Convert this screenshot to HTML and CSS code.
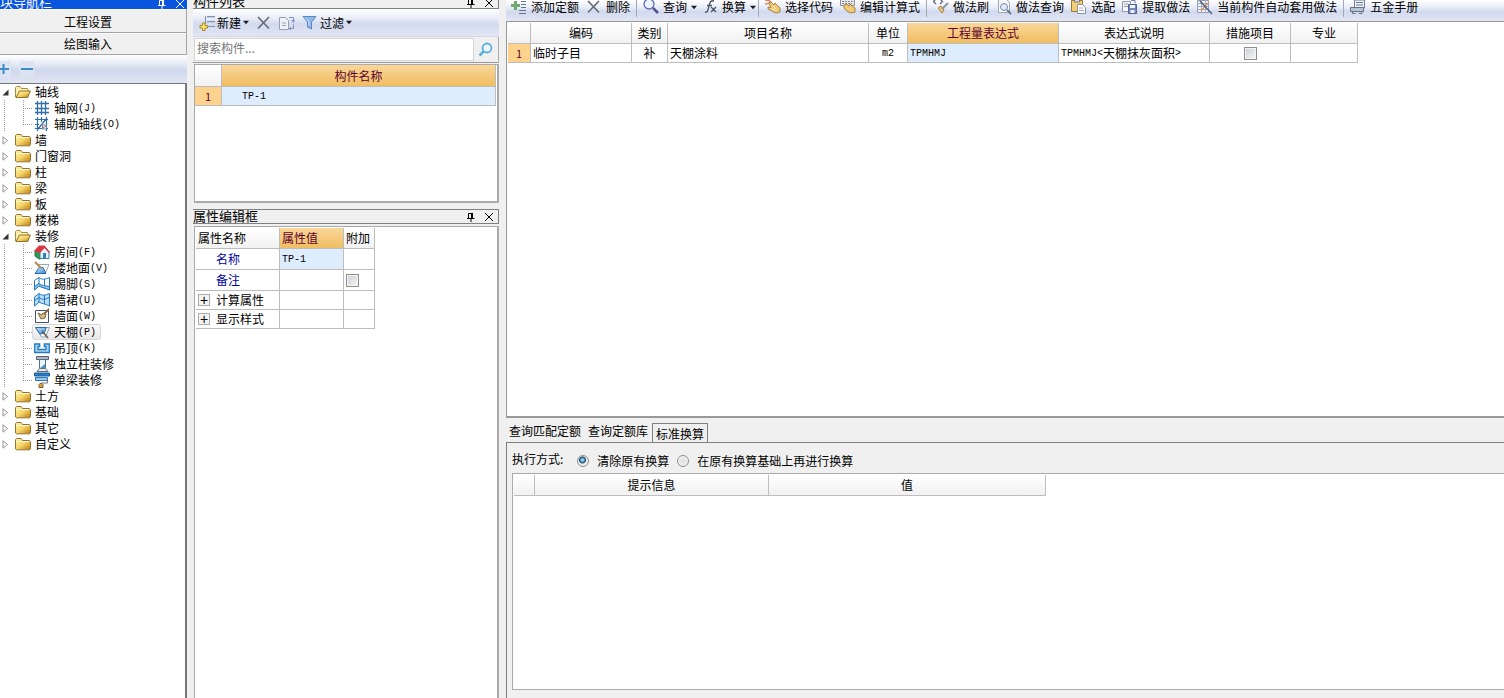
FILE: index.html
```html
<!DOCTYPE html>
<html lang="zh-CN">
<head>
<meta charset="utf-8">
<title>构件做法编辑</title>
<link rel="stylesheet" href="styles.css">
</head>
<body>
<svg class="defs" aria-hidden="true">
  <defs>
    <linearGradient id="gold" x1="0" y1="0" x2="1" y2="1"><stop offset="0" stop-color="#fff3b0"/><stop offset=".5" stop-color="#f6d56a"/><stop offset="1" stop-color="#b87a14"/></linearGradient>
    <linearGradient id="blue" x1="0" y1="0" x2="1" y2="1"><stop offset="0" stop-color="#cfe6fa"/><stop offset="1" stop-color="#3b86cf"/></linearGradient>
    <symbol id="open" viewBox="0 0 7 7"><path d="M6.500 .5v6H.5z" fill="#333"/></symbol>
    <symbol id="shut" viewBox="0 0 7 9"><path d="M1 .8 5.500 4.500 1 8.200z" fill="#fff" stroke="#909090"/></symbol>
    <symbol id="folder" viewBox="0 0 16 16"><path d="M.5 13V3.500l1-1H6l1.500 2h7l1 1V13l-1 .8h-13z" fill="url(#gold)" stroke="#94752a"/><path d="M1.500 5.500h13" stroke="#fff6cf"/></symbol>
    <symbol id="folder-open" viewBox="0 0 16 16"><path d="M.5 13V3.500l1-1H5l1.500 2h6l.5 1V13z" fill="#fff0b0" stroke="#a58a45"/><path d="m1 13.500 3.500-6.500h11L12.500 13.500z" fill="url(#gold)" stroke="#94752a"/></symbol>
    <symbol id="grid" viewBox="0 0 16 16"><path d="M3.500 1v14M7.500 1v14M11.500 1v14M1 3.500h14M1 8.500h14M1 12.500h14" fill="none" stroke="#2f6ca8" stroke-width="1.300"/></symbol>
    <symbol id="axis" viewBox="0 0 16 16"><path d="M3.500 1v14M12.500 1v14M1 3.500h13M1 12.500h13M7.500 1v5M1 8.500h4M4 13l9-11" fill="none" stroke="#2f6ca8" stroke-width="1.200"/><path d="M8.500 9h4v4h-4z" fill="#e3eef8" stroke="#77899b"/><path d="m9 12 3-2" stroke="#b66"/></symbol>
    <symbol id="house" viewBox="0 0 16 16"><path d="m1 7 5-5 4 4v8l-5 1-4-3z" fill="#2d9b50" stroke="#247c43"/><path d="m6 7 4.500-4L15 8v6.500H6z" fill="#e8f3fb" stroke="#3c7cad"/><path d="M0 7 5 1.500h5.500L16 8l-1 1-4.500-5L6 9z" fill="#d93640"/><path d="M9 9h3v5.500H9z" fill="#2f82bd"/></symbol>
    <symbol id="floor" viewBox="0 0 16 16"><path d="M5 4.500h10L11.500 13" fill="#fff" stroke="#9aa7b4"/><path d="m1 13.500 4-6h4l3 6z" fill="url(#blue)" stroke="#236eb3"/><path d="M1 2 7 8" stroke="#b88846" stroke-width="2"/></symbol>
    <symbol id="skirt" viewBox="0 0 16 16"><path d="M.5 4.500 5 1.500v8l-4.500 4zM5 1.500c3 2.500 6 2 10.500 0V14C11 11.500 8 12 5 9.500" fill="#fff" stroke="#2479bd"/><path d="M.5 10.500 5 7.500c3 2.500 6 2 10.500 3V14C11 11.500 8 12 5 10l-4.500 4z" fill="#8cc7ef" stroke="#2479bd"/><path d="M10.500 3v6" stroke="#2479bd"/></symbol>
    <symbol id="dado" viewBox="0 0 16 16"><path d="M.5 5 5 1.500c3 2.500 6 2 10.500 0V14C11 11.500 8 12 5 10L.5 14z" fill="#b9def6" stroke="#2479bd"/><path d="M.5 8.500 5 5.500c3 2.500 6 2 10.500 0M5 1.500V10M10.500 3v9" fill="none" stroke="#2479bd"/></symbol>
    <symbol id="wall" viewBox="0 0 16 16"><path d="M1.500 2.500h13v12h-13z" fill="#fff" stroke="#42586f"/><path d="m4 5 3 6 4-1 1-4-3-1-1 2z" fill="#d9bc85" stroke="#80643f"/><path d="m10 6 5-5" stroke="#8c6940" stroke-width="2"/></symbol>
    <symbol id="ceiling" viewBox="0 0 16 16"><path d="M1.500 3.500h14l-4 9.500h-4z" fill="#fff" stroke="#8ca0b2"/><path d="M1.500 3.500h11l-2.500 6-4 .5z" fill="url(#blue)" stroke="#236eb3"/><path d="m8 7 6 7" stroke="#6e6251" stroke-width="1.600"/></symbol>
    <symbol id="drop" viewBox="0 0 16 16"><path d="M.7 4h5v2.500H4V9.500h8V6.500h-1.700V4h5v8.500H.7z" fill="#a7d7f8" stroke="#247bbd" stroke-width="1.300"/></symbol>
    <symbol id="column" viewBox="0 0 16 16"><path d="M2.500.5h12v3h-12z" fill="#aeb8c0" stroke="#56636f"/><path d="M5.500 3.500h6v9h-6z" fill="#eaf6ff" stroke="#56718b"/><path d="M3 15.500 5.500 12.500h6l2.500 3z" fill="#e9edf0" stroke="#63717d"/><path d="m6 12 5-4v4z" fill="#4c96cc"/></symbol>
    <symbol id="beam" viewBox="0 0 16 16"><path d="M.5 1h15v3H.5z" fill="#297fc7" stroke="#1f5f9a"/><path d="M1.500 5.500h12v3h-12z" fill="#94c9ef" stroke="#2f79b5"/><path d="M5 15.500v-3l1-1h2l1 1v3z" fill="#d9a04b" stroke="#85602b"/><path d="M7 11h6.500V8" fill="none" stroke="#777"/></symbol>
    <symbol id="pin" viewBox="0 0 10 10"><path d="M2.500 6V1.500h4V6M1 6.500h7.500M5 7v3" fill="none" stroke="currentColor"/><path d="M6 1v5" stroke="currentColor" stroke-width="2"/></symbol>
    <symbol id="close" viewBox="0 0 10 10"><path d="m1 1 8 8M9 1 1 9" stroke="currentColor"/></symbol>
    <symbol id="delete" viewBox="0 0 16 16"><path d="m2 2 11 11.500M13 2 2 13.500" stroke="#666d78" stroke-width="1.700"/></symbol>
    <symbol id="new" viewBox="0 0 16 16"><path d="M8 1.500h8M8 6.500h8M8 11.500h8M6.500 1v8" stroke="#7d91ad"/><path d="M8 2.500h8M8 7.500h8" stroke="#c3d0e2"/><path d="M3.500 8h2.500v2.500h2.500v2.500H6v2.500H3.500V13H1v-2.500h2.500z" fill="#ffe565" stroke="#a88b2a"/></symbol>
    <symbol id="copy" viewBox="0 0 16 16"><path d="M.5 2.500h6l3 3v9h-9z" fill="#eef1f6" stroke="#98a1b2"/><path d="M3 8h4M3 10.500h4" stroke="#98a1b2"/><path d="M10 2.500h4.500v3M10 13.500h4.500v-4" fill="none" stroke="#8290c0"/><path d="m12 5 2.500 3L16 5zM10 13.500l2-2v4z" fill="#8290c0"/></symbol>
    <symbol id="filter" viewBox="0 0 16 16"><path d="M1 1.500h13L9.500 7v7l-4-2V7z" fill="#8eb8e8" stroke="#5987c2"/><path d="m3 2.500 4 4v4" fill="none" stroke="#d5e7fa"/></symbol>
    <symbol id="search" viewBox="0 0 16 16"><circle cx="9" cy="6" r="4.500" fill="#eef8ff" stroke="#5bb0dd" stroke-width="1.800"/><path d="m5.500 9.500-4 4" stroke="#5bb0dd" stroke-width="2.500"/></symbol>
    <symbol id="lens" viewBox="0 0 16 16"><circle cx="6" cy="5" r="5" fill="#eaf3ff" stroke="#626fae" stroke-width="1.300"/><path d="m10 9 5 5" stroke="#4c538f" stroke-width="2.500"/></symbol>
    <symbol id="add" viewBox="0 0 16 16"><path d="M3 2h3v3h3v3H6v3H3V8H0V5h3z" fill="#70aa70"/><path d="M10 2.500h5M10 5.500h5M10 8.500h5M8 11.500h7M8 14.500h7" stroke="#687389"/></symbol>
    <symbol id="fx" viewBox="0 0 14 16"><path d="M1 13c3 1 3-3 4-6s1-6 5-5M3 6.500h5M7 8l5 5M12 8l-5 5" fill="none" stroke="#4e5566" stroke-width="1.400"/></symbol>
    <symbol id="hand" viewBox="0 0 16 16"><path d="m0 1 5 1M2 0l4 3M0 5l5-1" stroke="#d88c67" stroke-width="1.500"/><path d="m4 4 2-1 3 3 1-2 5 5v4l-4 1-4-2-4-2V8l3 1z" fill="#f0cb78" stroke="#aa813f"/><path d="m8 7 3 3M6 9l4 3" stroke="#fff2bb"/></symbol>
    <symbol id="keys" viewBox="0 0 16 16"><path d="M.5.5h14v6H.5z" fill="#e5e6e9" stroke="#8b8f99"/><path d="M2 2.500h11M2 4.500h10" stroke="#8b8f99" stroke-dasharray="2 1"/><path d="m4 6 2-1 3 2 1-2 5 4v4l-4 1-4-2-3-3z" fill="#f0cb78" stroke="#aa813f"/></symbol>
    <symbol id="brush" viewBox="0 0 16 16"><path d="M3 0 .5 2.500 3 5M7 0l2.500 2.500L7 5" fill="none" stroke="#626a80" stroke-width="1.300"/><path d="m5 9 3-2 3 4-2 3z" fill="#f0cb78" stroke="#aa813f"/><path d="m9 10 6-6" stroke="#8b94a8" stroke-width="2"/></symbol>
    <symbol id="doc" viewBox="0 0 16 16"><path d="M2.500 0v13.500h11V4l-3-4z" fill="#f8fafc" stroke="#a0a7b3"/><circle cx="8" cy="8" r="3.500" fill="#dceafa" stroke="#7c8cac"/><path d="m11 11 4 4" stroke="#68748f" stroke-width="2"/></symbol>
    <symbol id="paste" viewBox="0 0 16 16"><path d="M.5 1.500h11v11H.5z" fill="#f2cf72" stroke="#98783a"/><path d="M3.500 0h5v3h-5z" fill="#d7d9de" stroke="#777d88"/><path d="M6.500 5.500h5l3 3v6h-8z" fill="#fff" stroke="#8993a8"/><path d="M8 9h4M8 11.500h5" stroke="#a0a9bd"/></symbol>
    <symbol id="save" viewBox="0 0 16 16"><path d="M.5 2.500h8v10h-8z" fill="#f5f7fb" stroke="#9299ad"/><path d="M2 5h4M2 7.500h4" stroke="#9299ad"/><path d="M6.500 5.500h8v9h-8z" fill="#7689bb" stroke="#53658f"/><path d="M8 6h5v3H8zM8.500 11h4v3h-4z" fill="#edf1fa"/><path d="M9 1.500h4v3" fill="none" stroke="#6f80b2"/></symbol>
    <symbol id="auto" viewBox="0 0 16 16"><path d="M.5 1.500h11v12H.5z" fill="#f3f6fa" stroke="#8a98b2"/><path d="M0 4.500h12M0 7.500h12M0 10.500h12M4.500 1v13M8.500 1v13" stroke="#9dadc8"/><path d="m12 3-8 9" stroke="#dc9b59" stroke-width="1.600"/><path d="m3 2 12 13" stroke="#58657f" stroke-width="1.600"/></symbol>
    <symbol id="manual" viewBox="0 0 16 16"><path d="M4.500 1h10v8h-10z" fill="#eef3fa" stroke="#717d94"/><path d="M6 3.500h7M6 6h7" stroke="#717d94"/><path d="M.5 8.500h13v4H.5z" fill="#b9c5d5" stroke="#657286"/><path d="M2.500 12.500v2h3M9 14.500h3v-2" fill="none" stroke="#657286"/></symbol>
    <symbol id="down" viewBox="0 0 7 5"><path d="M0 .5h7L3.500 4.500z" fill="#1c1c1c"/></symbol>
    <symbol id="plus" viewBox="0 0 14 14"><path d="M1 7h11M6.500 2v10" stroke="#3c8cc6" stroke-width="2"/></symbol>
    <symbol id="minus" viewBox="0 0 14 14"><path d="M1 7h12" stroke="#3c8cc6" stroke-width="2"/></symbol>
  </defs>
</svg>
<div class="app">
  <nav class="nav">
    <header class="title title-active title-cut"><h2>块导航栏</h2><button aria-label="固定"><svg><use href="#pin"/></svg></button><button aria-label="关闭"><svg><use href="#close"/></svg></button></header>
    <button class="nav-tab">工程设置</button>
    <button class="nav-tab">绘图输入</button>
    <div class="nav-tools"><button aria-label="展开"><svg><use href="#plus"/></svg></button><button aria-label="折叠"><svg><use href="#minus"/></svg></button></div>
    <ul class="tree">
      <li><button class="node"><svg class="arrow"><use href="#open"/></svg><svg class="icon"><use href="#folder-open"/></svg>轴线</button>
        <ul class="branch">
          <li><button class="leaf"><svg class="icon"><use href="#grid"/></svg>轴网<span class="latin">(J)</span></button></li>
          <li><button class="leaf"><svg class="icon"><use href="#axis"/></svg>辅助轴线<span class="latin">(O)</span></button></li>
        </ul>
      </li>
      <li><button class="node"><svg class="arrow"><use href="#shut"/></svg><svg class="icon"><use href="#folder"/></svg>墙</button></li>
      <li><button class="node"><svg class="arrow"><use href="#shut"/></svg><svg class="icon"><use href="#folder"/></svg>门窗洞</button></li>
      <li><button class="node"><svg class="arrow"><use href="#shut"/></svg><svg class="icon"><use href="#folder"/></svg>柱</button></li>
      <li><button class="node"><svg class="arrow"><use href="#shut"/></svg><svg class="icon"><use href="#folder"/></svg>梁</button></li>
      <li><button class="node"><svg class="arrow"><use href="#shut"/></svg><svg class="icon"><use href="#folder"/></svg>板</button></li>
      <li><button class="node"><svg class="arrow"><use href="#shut"/></svg><svg class="icon"><use href="#folder"/></svg>楼梯</button></li>
      <li><button class="node"><svg class="arrow"><use href="#open"/></svg><svg class="icon"><use href="#folder-open"/></svg>装修</button>
        <ul class="branch">
          <li><button class="leaf"><svg class="icon"><use href="#house"/></svg>房间<span class="latin">(F)</span></button></li>
          <li><button class="leaf"><svg class="icon"><use href="#floor"/></svg>楼地面<span class="latin">(V)</span></button></li>
          <li><button class="leaf"><svg class="icon"><use href="#skirt"/></svg>踢脚<span class="latin">(S)</span></button></li>
          <li><button class="leaf"><svg class="icon"><use href="#dado"/></svg>墙裙<span class="latin">(U)</span></button></li>
          <li><button class="leaf"><svg class="icon"><use href="#wall"/></svg>墙面<span class="latin">(W)</span></button></li>
          <li><button class="leaf selected"><svg class="icon"><use href="#ceiling"/></svg>天棚<span class="latin">(P)</span></button></li>
          <li><button class="leaf"><svg class="icon"><use href="#drop"/></svg>吊顶<span class="latin">(K)</span></button></li>
          <li><button class="leaf"><svg class="icon"><use href="#column"/></svg>独立柱装修</button></li>
          <li><button class="leaf"><svg class="icon"><use href="#beam"/></svg>单梁装修</button></li>
        </ul>
      </li>
      <li><button class="node"><svg class="arrow"><use href="#shut"/></svg><svg class="icon"><use href="#folder"/></svg>土方</button></li>
      <li><button class="node"><svg class="arrow"><use href="#shut"/></svg><svg class="icon"><use href="#folder"/></svg>基础</button></li>
      <li><button class="node"><svg class="arrow"><use href="#shut"/></svg><svg class="icon"><use href="#folder"/></svg>其它</button></li>
      <li><button class="node"><svg class="arrow"><use href="#shut"/></svg><svg class="icon"><use href="#folder"/></svg>自定义</button></li>
    </ul>
  </nav>

  <section class="middle">
    <header class="title title-cut"><h2>构件列表</h2><button aria-label="固定"><svg><use href="#pin"/></svg></button><button aria-label="关闭"><svg><use href="#close"/></svg></button></header>
    <div class="toolbar list-tools">
      <button><svg class="icon"><use href="#new"/></svg>新建<svg class="down"><use href="#down"/></svg></button>
      <button aria-label="删除"><svg class="icon"><use href="#delete"/></svg></button>
      <button aria-label="复制"><svg class="icon"><use href="#copy"/></svg></button>
      <button><svg class="icon"><use href="#filter"/></svg>过滤<svg class="down"><use href="#down"/></svg></button>
    </div>
    <div class="search"><input type="text" placeholder="搜索构件..." aria-label="搜索构件"><button aria-label="搜索"><svg class="icon"><use href="#search"/></svg></button></div>
    <div class="pane list-pane">
      <table class="wide">
        <colgroup><col class="w27"><col></colgroup>
        <thead><tr><th></th><th class="hot">构件名称</th></tr></thead>
        <tbody><tr><td class="num">1</td><td class="current indent latin">TP-1</td></tr></tbody>
      </table>
    </div>
    <header class="title title-full"><h2>属性编辑框</h2><button aria-label="固定"><svg><use href="#pin"/></svg></button><button aria-label="关闭"><svg><use href="#close"/></svg></button></header>
    <div class="pane props-pane">
      <table class="props">
        <colgroup><col class="w84"><col class="w64"><col class="w31"></colgroup>
        <thead><tr><th>属性名称</th><th class="hot">属性值</th><th>附加</th></tr></thead>
        <tbody>
          <tr class="tall"><td class="key">名称</td><td class="current latin">TP-1</td><td></td></tr>
          <tr class="tall"><td class="key">备注</td><td></td><td><input type="checkbox" aria-label="备注附加"></td></tr>
          <tr><td><div class="group"><button class="expand" aria-label="展开计算属性">+</button>计算属性</div></td><td></td><td></td></tr>
          <tr><td><div class="group"><button class="expand" aria-label="展开显示样式">+</button>显示样式</div></td><td></td><td></td></tr>
        </tbody>
      </table>
    </div>
  </section>

  <main class="main">
    <div class="toolbar main-tools">
      <button><svg class="icon"><use href="#add"/></svg>添加定额</button>
      <button><svg class="icon"><use href="#delete"/></svg>删除</button>
      <i class="sep"></i>
      <button><svg class="icon"><use href="#lens"/></svg>查询<svg class="down"><use href="#down"/></svg></button>
      <button><svg class="icon narrow"><use href="#fx"/></svg>换算<svg class="down"><use href="#down"/></svg></button>
      <i class="sep tight"></i>
      <button><svg class="icon"><use href="#hand"/></svg>选择代码</button>
      <button><svg class="icon"><use href="#keys"/></svg>编辑计算式</button>
      <i class="sep"></i>
      <button><svg class="icon"><use href="#brush"/></svg>做法刷</button>
      <button><svg class="icon"><use href="#doc"/></svg>做法查询</button>
      <button><svg class="icon"><use href="#paste"/></svg>选配</button>
      <button><svg class="icon"><use href="#save"/></svg>提取做法</button>
      <button><svg class="icon"><use href="#auto"/></svg>当前构件自动套用做法</button>
      <i class="sep"></i>
      <button><svg class="icon"><use href="#manual"/></svg>五金手册</button>
    </div>
    <div class="work">
      <table class="items">
        <colgroup><col class="w23"><col class="w101"><col class="w36"><col class="w201"><col class="w39"><col class="w151"><col class="w151"><col class="w81"><col class="w67"></colgroup>
        <thead><tr><th></th><th>编码</th><th>类别</th><th>项目名称</th><th>单位</th><th class="hot">工程量表达式</th><th>表达式说明</th><th>措施项目</th><th>专业</th></tr></thead>
        <tbody><tr><td class="num">1</td><td>临时子目</td><td class="mid">补</td><td>天棚涂料</td><td class="mid latin">m2</td><td class="current latin">TPMHMJ</td><td><div class="mixed"><span class="latin">TPMHMJ&lt;</span>天棚抹灰面积<span class="latin">&gt;</span></div></td><td class="mid"><input type="checkbox" aria-label="措施项目"></td><td></td></tr></tbody>
      </table>
    </div>
    <div class="tabs" role="tablist"><button role="tab">查询匹配定额</button><button role="tab">查询定额库</button><button role="tab" class="active" aria-selected="true">标准换算</button></div>
    <div class="convert">
      <div class="modes"><span>执行方式:</span><label><input type="radio" name="mode" checked>清除原有换算</label><label><input type="radio" name="mode">在原有换算基础上再进行换算</label></div>
      <div class="result">
        <table class="hints">
          <colgroup><col class="w21"><col class="w234"><col class="w277"></colgroup>
          <thead><tr><th></th><th>提示信息</th><th>值</th></tr></thead>
        </table>
      </div>
    </div>
  </main>
</div>
</body>
</html>
```
FILE: styles.css
```css
* { box-sizing: border-box; }
body { margin: 0; background: #f0f0f0; color: #000; font: 12px/16px "Noto Sans CJK SC", sans-serif; }
button { display: flex; align-items: center; margin: 0; padding: 0; border: 0; background: none; color: inherit; font: inherit; white-space: nowrap; }
input { margin: 0; font: inherit; }
svg { flex: none; display: block; }
ul { margin: 0; padding: 0; list-style: none; }
.defs { position: absolute; width: 0; height: 0; }
.icon { width: 16px; height: 16px; }
.icon.narrow { width: 14px; }
.down { width: 6px; height: 5px; }
.latin { font-family: "Liberation Mono", monospace; font-size: 10px; line-height: 12px; }
span.latin { padding-top: 1px; }
td.latin { padding-top: 2px; }

.app { display: grid; grid-template-columns: 187px 306px minmax(0, 1fr); column-gap: 6px; height: 100vh; overflow: hidden; }
.nav, .middle, .main { display: flex; flex-direction: column; min-width: 0; min-height: 0; }
.main { margin-left: 1px; }

.title { display: flex; flex: none; align-items: center; gap: 8px; padding-right: 4px; border: 1px solid #808080; }
.title h2 { flex: 1; margin: 0; font-size: 13px; font-weight: 400; line-height: 14px; }
.title svg { width: 10px; height: 10px; }
.title-cut { align-items: flex-end; height: 9px; border-top: 0; overflow: hidden; }
.title-full { height: 15px; margin-top: 6px; border-left-width: 0; }
.title-full h2 { padding-bottom: 2px; }
.title-active { border: 0; background: #0a55e0; color: #fff; padding-right: 2px; }
.middle .title-cut { border-left: 0; }

.nav-tab { flex: none; justify-content: center; height: 22px; padding-right: 10px; border: 1px solid #a5a5a5; border-width: 0 1px 1px 0; background: #f0f0f0; box-shadow: inset 0 1px #fff; }
.title-active + .nav-tab { height: 24px; padding-top: 2px; }
.nav-tools { display: flex; flex: none; align-items: center; gap: 9px; height: 28px; background: linear-gradient(#fff, #e7ebf6 30%, #d0d8ee 55%, #e1e5f3); }
.nav-tools button { padding: 1px 0; background: #dce4f3; }
.nav-tools button:first-child { width: 11px; }
.nav-tools svg { width: 14px; height: 14px; }
.nav-tools button:first-child svg { margin-left: -3px; }
.tree { flex: 1; min-height: 0; overflow: hidden; border: solid #777; border-width: 1px 2px 0 0; background: #fff; }
.node { height: 16px; padding-left: 2px; }
.node .arrow { width: 7px; height: 9px; }
.node .icon { margin: 0 4px 0 6px; }
.branch { background: linear-gradient(#999 50%, transparent 50%) 4px 0 / 1px 2px repeat-y; }
.branch li { display: flex; align-items: center; height: 16px; padding-left: 23px; background: linear-gradient(#999 50%, transparent 50%) 23px 0 / 1px 2px repeat-y; }
.branch li:last-child { background: linear-gradient(#fff, #fff) 23px 9px / 1px 8px no-repeat, linear-gradient(#999 50%, transparent 50%) 23px 0 / 1px 2px repeat-y; }
.branch li::before { content: ""; width: 9px; height: 1px; background: repeating-linear-gradient(90deg, #999 0 1px, transparent 1px 2px); }
.leaf { height: 16px; padding: 0 4px 0 1px; border: 1px solid transparent; }
.leaf .icon { margin-right: 4px; }
.leaf.selected { border-color: #d8d8d8; border-radius: 3px; background: linear-gradient(#fafafa, #e8e8e8); }

.toolbar { display: flex; flex: none; align-items: center; background: linear-gradient(#fff, #e9edf8 35%, #d2daef 55%, #e2e6f4); }
.toolbar button { gap: 4px; }
.list-tools { gap: 7px; height: 28px; padding-left: 6px; border-bottom: 1px solid #d5d8e6; }
.list-tools button { gap: 2px; }
.search { display: flex; flex: none; height: 26px; border-right: 1px solid #aaa; border-bottom: 1px solid #999; padding: 1px 0 1px 1px; }
.search input { flex: 1; min-width: 0; padding: 0 2px 4px; border: 1px solid #d5d5d5; background: #fff; outline: 0; }
.search input::placeholder { color: #777; opacity: 1; }
.search button { width: 24px; justify-content: center; }

.pane { margin-left: 1px; border: solid #aaa; border-width: 1px 2px 1px 1px; background: #fff; padding: 1px 0 0 1px; }
.list-pane { height: 139px; margin-top: 1px; flex: none; padding: 0 1px 0 0; border-width: 1px 2px 2px 1px; }
.props-pane { flex: 1; min-height: 0; margin-top: 2px; border-bottom: 0; }
table { table-layout: fixed; border-collapse: separate; border-spacing: 0; }
th, td { height: 19px; padding: 0 2px; border: solid #bdbdbd; border-width: 0 1px 1px 0; font-weight: 400; line-height: 16px; text-align: left; white-space: nowrap; }
th { height: 21px; padding: 0; background: linear-gradient(#fff, #f1f1f1); text-align: center; }
.hot { background: linear-gradient(#f9d79a, #f0bd60); color: #600030; }
td.num { padding: 0; background: #fdd28d; color: #600030; text-align: center; font-size: 11px; }
.current { background: #deedfd; }
td.indent { padding-left: 20px; }
td.latin { padding-top: 2px; line-height: 12px; }
.mid { text-align: center; }
.mixed { display: flex; align-items: center; height: 16px; }
.wide { width: 100%; }
.wide th { height: 22px; }
.props { width: 179px; }
.props th { padding-left: 2px; text-align: left; }
.tall td { height: 21px; }
td.key { padding-left: 20px; color: #00009c; }
.group { display: flex; align-items: center; gap: 6px; }
.expand { justify-content: center; width: 12px; height: 12px; border: 1px solid #aaa; background: #f3f3f3; font: 14px/10px "Liberation Sans", sans-serif; }
input[type="checkbox"] { display: block; appearance: none; width: 13px; height: 13px; border: 1px solid #8e8f8f; background: linear-gradient(135deg, #cbcfd5, #f6f6f6); box-shadow: inset 0 0 0 1px #f4f4f4; }
.mid input[type="checkbox"] { margin: 0 auto; }
.w21 { width: 21px; } .w23 { width: 23px; } .w27 { width: 27px; } .w31 { width: 31px; }
.w36 { width: 36px; } .w39 { width: 39px; } .w64 { width: 64px; } .w67 { width: 67px; }
.w81 { width: 81px; } .w84 { width: 84px; } .w101 { width: 101px; } .w151 { width: 151px; }
.w201 { width: 201px; } .w234 { width: 234px; } .w277 { width: 277px; }

.main-tools { gap: 7px; height: 21px; padding: 0 0 7px 5px; overflow: hidden; }
.sep { flex: none; width: 1px; height: 20px; margin: 0 -1px; background: #a3a8b5; }
.sep.tight { margin-left: -5px; }
.work { flex: none; height: 397px; padding: 1px 0 0 1px; border: solid #999; border-width: 1px 0 2px 1px; background: #fff; }
.items { width: 850px; }
.tabs { display: flex; flex: none; align-items: flex-end; height: 24px; padding-left: 3px; }
.tabs button { height: 22px; margin-right: 7px; }
.tabs button:nth-child(2) { margin-right: 4px; }
.tabs .active { height: 20px; margin: 0 0 -1px; padding: 0 3px; border: 1px solid #808080; border-bottom: 0; background: #f0f0f0; }
.convert { display: flex; flex: 1; flex-direction: column; min-height: 0; padding: 0 0 8px 5px; border: solid #808080; border-width: 1px 0 0 1px; }
.modes { display: flex; flex: none; align-items: center; height: 30px; padding-top: 6px; }
.modes span { margin: -4px 14px 0 0; }
.modes label { display: flex; align-items: center; gap: 8px; margin-right: 8px; }
input[type="radio"] { appearance: none; width: 12px; height: 12px; border: 1px solid #8e8f8f; border-radius: 50%; background: radial-gradient(#ddd, #fafafa); }
input[type="radio"]:checked { background: radial-gradient(circle at 45% 40%, #8fd0ee 0 1px, #174a72 3px, #eee 4px); }
.result { flex: 1; min-height: 0; padding: 1px; border: solid #aaa; border-width: 1px 0 1px 1px; background: #fff; }
.hints { width: 532px; }
```
